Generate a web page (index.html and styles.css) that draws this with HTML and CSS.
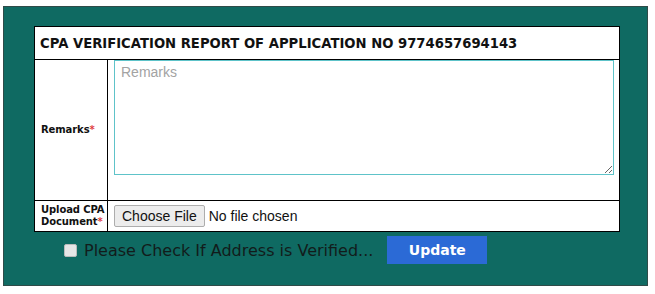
FILE: index.html
```html
<!doctype html>
<html>

<head>
    <meta charset="utf-8" />
    <link rel="stylesheet" href="styles.css">
</head>

<body>

    <div class="panel">

        <table class="report">
            <tr>
                <th colspan="2" class="title">CPA VERIFICATION REPORT OF APPLICATION NO 9774657694143</th>
            </tr>
            <tr class="remarks-row">
                <td class="label">Remarks<span class="req">*</span></td>
                <td class="field"><textarea class="remarks" placeholder="Remarks"></textarea></td>
            </tr>
            <tr class="upload-row">
                <td class="label">Upload CPA<br>Document<span class="req">*</span></td>
                <td class="field">
                    <span class="file-btn">Choose File</span><span class="file-name">No file chosen</span>
                </td>
            </tr>
        </table>

        <div class="actions">
            <label class="check"><span class="box"></span>Please Check If Address is Verified...</label>
            <span class="btn" id="updateButton">Update</span>
        </div>

    </div>

</body>

</html>
```

FILE: styles.css
```css
html,
body {
    margin: 0 0;
    background-color: white;
    font-family: "DejaVu Sans", Verdana, sans-serif;
}

.panel {
    margin: 6px 0 0 3px;
    width: 645px;
    height: 280px;
    background-color: #0f6a62;
    border: 1px solid #2f4b48;
    padding: 19px 0 0 30px;
    box-sizing: border-box;
}

.report {
    width: 586px;
    border-collapse: collapse;
    background-color: white;
}

.report th,
.report td {
    border: 1px solid black;
    padding: 0;
}

.report .title {
    height: 32px;
    text-align: left;
    padding-left: 5px;
    font-size: 13.2px;
    font-weight: bold;
    color: #111;
}

.report .label {
    width: 66px;
    padding-left: 6px;
    font-size: 10px;
    font-weight: bold;
    color: #111;
    line-height: 12px;
    white-space: nowrap;
    letter-spacing: -0.1px;
}

.report .req {
    color: #e0403f;
}

.report .field {
    padding-left: 6px;
}

.remarks-row {
    height: 141px;
}

.remarks-row .field {
    vertical-align: top;
}

.remarks {
    display: block;
    box-sizing: border-box;
    width: 500px;
    height: 115px;
    margin: 0;
    border: 1px solid #5ec3c9;
    padding: 3px 6px;
    font-family: Arial, "Liberation Sans", sans-serif;
    font-size: 14px;
    resize: vertical;
}

.remarks::placeholder {
    color: #a3a3a3;
}

.upload-row {
    height: 31px;
}

.upload-row .field {
    font-family: Arial, "Liberation Sans", sans-serif;
    font-size: 14px;
}

.file-btn {
    display: inline-block;
    box-sizing: border-box;
    height: 22px;
    line-height: 20px;
    padding: 0 7px;
    border: 1px solid #adadad;
    border-radius: 2px;
    background-color: #ececec;
    color: #111;
}

.file-name {
    margin-left: 4px;
    color: #111;
}

.actions {
    display: flex;
    align-items: center;
    margin-top: 4px;
    padding-left: 30px;
}

.check {
    display: flex;
    align-items: center;
    font-size: 16px;
    color: #121c1b;
}

.check .box {
    width: 11px;
    height: 11px;
    border-radius: 2px;
    background-color: #e6e6e6;
    border: 1px solid #bbb;
    margin-right: 7px;
}

.btn {
    margin-left: 14px;
    width: 100px;
    height: 28px;
    line-height: 28px;
    text-align: center;
    background-color: #2b6ad6;
    color: white;
    font-weight: bold;
    font-size: 14px;
}
```
